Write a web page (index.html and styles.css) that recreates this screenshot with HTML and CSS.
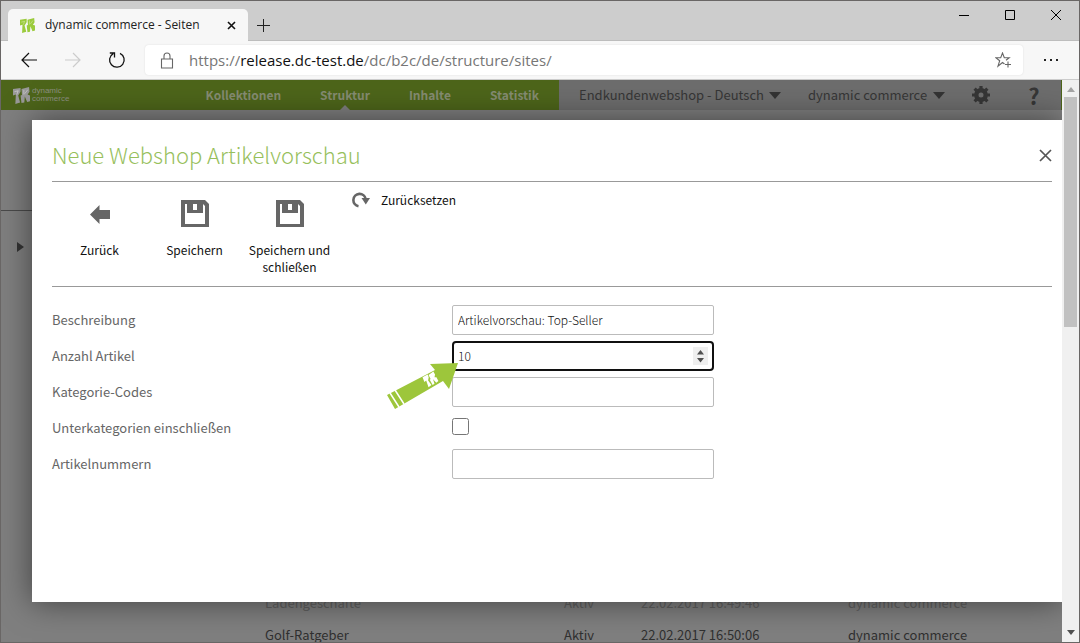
FILE: index.html
```
<!DOCTYPE html>
<html lang="de">
<head>
    <meta charset="UTF-8">
    <meta name="viewport" content="width=device-width, initial-scale=1.0">
    <title>dynamic commerce - Seiten</title>
    <link rel="stylesheet" href="styles.css">
</head>
<body>
    <svg class="sprite" width="0" height="0">
        <symbol id="logo" viewBox="0 0 18 18">
            <path d="M0 2l8-1v4L5.500 9l2 7.500-5 1.500L3 8 0 9z"/>
            <path d="M9 2l8-2 .5 5-2 3 2.500 1 .5 6-3.500 1-2.500-6-.5 6.500-3 .5-1-8 1.500-.5z"/>
            <path d="M1.500 5l4-1-1.500 4M11.500 3v5M15.500 3l-3 4" class="logo-gap"/>
        </symbol>
        <symbol id="disk" viewBox="0 0 28 28">
            <path fill-rule="evenodd" d="M0 0h24l4 4v23H0zM4 4v20h20V6l-2-2v9H6V4zM12 4v6h4V4z"/>
        </symbol>
    </svg>

    <div class="window">
        <!-- Tabs -->
        <div class="tabbar">
            <div class="tab">
                <svg class="tab-icon" width="15" height="15"><use href="#logo"/></svg>
                <span class="tab-title">dynamic commerce - Seiten</span>
                <button class="icon-button" aria-label="Tab schließen">
                    <svg width="9" height="9" viewBox="0 0 9 9"><path d="M1 1l7 7M8 1L1 8" stroke="#111" stroke-width="1.6"/></svg>
                </button>
            </div>
            <button class="icon-button new-tab" aria-label="Neuer Tab">
                <svg width="13" height="13" viewBox="0 0 13 13"><path d="M6.5 0v13M0 6.5h13" stroke="#222" stroke-width="1"/></svg>
            </button>
            <div class="window-controls">
                <button class="icon-button" aria-label="Minimieren">
                    <svg width="10" height="10" viewBox="0 0 10 10"><path d="M0 5.5h10" stroke="#000"/></svg>
                </button>
                <button class="icon-button" aria-label="Maximieren">
                    <svg width="10" height="10" viewBox="0 0 10 10"><path d="M.5.5h9v9h-9z" fill="none" stroke="#000"/></svg>
                </button>
                <button class="icon-button" aria-label="Schließen">
                    <svg width="10" height="10" viewBox="0 0 10 10"><path d="M0 0l10 10M10 0L0 10" stroke="#000"/></svg>
                </button>
            </div>
        </div>

        <!-- Address bar -->
        <div class="addressbar">
            <button class="icon-button" aria-label="Zurück">
                <svg width="16" height="16" viewBox="0 0 16 16" fill="none" stroke="#111" stroke-width="1.2"><path d="M16 8H1M8 1L1 8l7 7"/></svg>
            </button>
            <button class="icon-button" aria-label="Vorwärts">
                <svg width="16" height="16" viewBox="0 0 16 16" fill="none" stroke="#ccc" stroke-width="1.2"><path d="M0 8h15M8 1l7 7-7 7"/></svg>
            </button>
            <button class="icon-button" aria-label="Neu laden">
                <svg width="18" height="18" viewBox="0 0 18 18" fill="none" stroke="#111" stroke-width="1.3"><path d="M12 2.3A7.3 7.3 0 1 1 5.2 2.6M1.8 2H6.500v4.500"/></svg>
            </button>
            <div class="url">
                <svg width="14" height="17" viewBox="0 0 14 17" fill="none" stroke="#666" stroke-width="1.1"><path d="M1.500 7h11v9h-11zM4 7V4a3 3 0 0 1 6 0v3"/></svg>
                <span class="url-text">https://<b>release.dc-test.de</b>/dc/b2c/de/structure/sites/</span>
                <button class="icon-button" aria-label="Favorit">
                    <svg width="17" height="16" viewBox="0 0 17 16" fill="none" stroke="#666" stroke-width="1.1"><path d="M9.500 12L7.500 10.500 3 14.200l1.700-5.500L.8 5.700h4.900L7.500 1l1.800 4.700h4.900L11 8.200M10 12.500h6M13 9.500v6"/></svg>
                </button>
            </div>
            <button class="icon-button more" aria-label="Mehr">
                <svg width="14" height="2" viewBox="0 0 14 2"><path d="M0 0h2v2H0zM6 0h2v2H6zM12 0h2v2h-2z" fill="#222"/></svg>
            </button>
        </div>

        <div class="viewport">
            <div class="page">
                <header class="header">
                    <div class="header-main">
                        <a class="brand" href="#">
                            <svg width="17" height="17"><use href="#logo"/></svg>
                            <span>dynamic<br>commerce</span>
                        </a>
                        <nav class="nav">
                            <a href="#">Kollektionen</a>
                            <a href="#" class="active">Struktur</a>
                            <a href="#">Inhalte</a>
                            <a href="#">Statistik</a>
                        </nav>
                    </div>
                    <div class="header-tools">
                        <select aria-label="Shop"><option>Endkundenwebshop - Deutsch</option></select>
                        <select aria-label="Benutzer"><option>dynamic commerce</option></select>
                        <button class="icon-button" aria-label="Einstellungen">
                            <svg width="18" height="18" viewBox="0 0 18 18"><circle cx="9" cy="9" r="4.700" fill="none" stroke="#363636" stroke-width="4.400"/><path d="M9 0v4M9 14v4M0 9h4M14 9h4M2.600 2.600l3 3M12.400 12.400l3 3M2.600 15.400l3-3M12.400 5.600l3-3" stroke="#363636" stroke-width="3.200"/></svg>
                        </button>
                        <button class="icon-button help" aria-label="Hilfe">?</button>
                    </div>
                </header>
                <div class="content">
                    <aside class="sidebar">
                        <svg width="7" height="10" viewBox="0 0 7 10"><path d="M0 0l7 5-7 5z" fill="#333"/></svg>
                    </aside>
                    <table class="list">
                        <tr class="faded"><td>Ladengeschäfte</td><td>Aktiv</td><td>22.02.2017 16:49:46</td><td>dynamic commerce</td></tr>
                        <tr><td>Golf-Ratgeber</td><td>Aktiv</td><td>22.02.2017 16:50:06</td><td>dynamic commerce</td></tr>
                    </table>
                </div>

                <section class="modal" role="dialog" aria-labelledby="modalTitle">
                    <div class="modal-head">
                        <h1 id="modalTitle">Neue Webshop Artikelvorschau</h1>
                        <button class="icon-button" aria-label="Dialog schließen">
                            <svg width="13" height="13" viewBox="0 0 13 13"><path d="M1 1l11 11M12 1L1 12" stroke="#555" stroke-width="1.700"/></svg>
                        </button>
                    </div>
                    <div class="toolbar">
                        <button class="tool">
                            <span class="tool-icon"><svg width="20" height="19" viewBox="0 0 20 19"><path d="M0 9.500L9.500 0v5H20v9H9.500v5z"/></svg></span>
                            Zurück
                        </button>
                        <button class="tool">
                            <span class="tool-icon"><svg width="28" height="28"><use href="#disk"/></svg></span>
                            Speichern
                        </button>
                        <button class="tool">
                            <span class="tool-icon"><svg width="28" height="28"><use href="#disk"/></svg></span>
                            Speichern und schließen
                        </button>
                        <button class="reset">
                            <svg width="18" height="16" viewBox="0 0 18 16"><path d="M6.500 14.200A6.200 6.200 0 1 1 13.700 7" fill="none" stroke="#666" stroke-width="2.600"/><path d="M9.500 6H18l-4.200 6.500z"/></svg>
                            Zurücksetzen
                        </button>
                    </div>
                    <form class="form">
                        <label for="description">Beschreibung</label>
                        <div class="field"><input type="text" id="description" value="Artikelvorschau: Top-Seller"></div>

                        <label for="count">Anzahl Artikel</label>
                        <div class="field">
                            <input type="number" id="count" class="focused" value="10">
                            <svg class="spinner" width="15" height="18" viewBox="0 0 15 18"><path d="M0 0h15v18H0z" fill="#efefef"/><path d="M4 7.500L7.500 3 11 7.500zM4 11h7l-3.500 4.500z" fill="#505050"/></svg>
                            <svg class="pointer" width="72" height="47" viewBox="0 0 72 47">
                                <path d="M71 1L43 2l5 6L0 33l8 14 48-28 6 8z" fill="#9dc63b"/>
                                <path d="M3 31l9 14M8 28l9 14" stroke="#fff" stroke-width="1.500"/>
                                <g fill="#fff" transform="translate(35 14) rotate(-22) scale(.72)">
                                    <path d="M0 2l8-1v4L5.500 9l2 7.500-5 1.500L3 8 0 9z"/>
                                    <path d="M9 2l8-2 .5 5-2 3 2.500 1 .5 6-3.500 1-2.500-6-.5 6.500-3 .5-1-8 1.500-.5z"/>
                                </g>
                            </svg>
                        </div>

                        <label for="category">Kategorie-Codes</label>
                        <div class="field"><input type="text" id="category"></div>

                        <label for="subcategories">Unterkategorien einschließen</label>
                        <div class="field"><input type="checkbox" id="subcategories"></div>

                        <label for="articles">Artikelnummern</label>
                        <div class="field"><input type="text" id="articles"></div>
                    </form>
                </section>
            </div>
            <div class="scrollbar">
                <svg width="8" height="5" viewBox="0 0 8 5"><path d="M0 5l4-5 4 5z" fill="#a3a3a3"/></svg>
                <div class="thumb"></div>
                <svg width="8" height="5" viewBox="0 0 8 5"><path d="M0 0h8L4 5z" fill="#505050"/></svg>
            </div>
        </div>
    </div>
</body>
</html>
```

FILE: styles.css
```
* {
    box-sizing: border-box;
}

body {
    margin: 0;
    font-family: "Noto Sans CJK SC", "Noto Sans", sans-serif;
    font-size: 13px;
    line-height: 18px;
    color: #666;
}

button, input, select {
    font: inherit;
    color: inherit;
}

svg {
    display: block;
    flex: none;
}

.sprite {
    position: absolute;
}

.logo-gap {
    fill: none;
    stroke: #fff;
    stroke-opacity: 0.4;
}

.icon-button {
    display: flex;
    align-items: center;
    justify-content: center;
    flex: none;
    padding: 0;
    border: none;
    background: none;
    cursor: pointer;
}

.window {
    display: flex;
    flex-direction: column;
    height: 100vh;
    border: 1px solid #696665;
    overflow: hidden;
}

/* browser tabs */
.tabbar {
    display: flex;
    align-items: flex-end;
    flex: none;
    height: 40px;
    padding-left: 7px;
    background: #cdcdcd;
    font-family: "Open Sans", sans-serif;
    box-shadow: inset 0 -1px #bdbdbd;
}

.tab {
    display: flex;
    align-items: center;
    gap: 10px;
    width: 240px;
    height: 32px;
    padding: 0 12px;
    border-radius: 5px 5px 0 0;
    background: #f7f7f7;
}

.tab-icon {
    fill: #9bcb3c;
}

.tab-title {
    flex: 1;
    font-size: 12px;
    color: #222;
    white-space: nowrap;
}

.new-tab {
    width: 31px;
    height: 32px;
}

.window-controls {
    display: flex;
    align-self: flex-start;
    margin-left: auto;
}

.window-controls .icon-button {
    width: 46px;
    height: 28px;
}

/* address bar */
.addressbar {
    display: flex;
    align-items: center;
    flex: none;
    height: 39px;
    padding-left: 6px;
    background: #f7f7f7;
    border-bottom: 1px solid #ccc;
}

.addressbar > .icon-button {
    width: 44px;
    height: 30px;
}

.addressbar > .more {
    width: 56px;
}

.url {
    display: flex;
    align-items: center;
    flex: 1;
    gap: 15px;
    height: 30px;
    margin-left: 6px;
    padding: 0 11px 0 15px;
    border-radius: 4px;
    background: #fff;
    box-shadow: 0 0 2px #ddd;
}

.url-text {
    flex: 1;
    font-family: "Open Sans", sans-serif;
    font-size: 15px;
    color: #767676;
}

.url-text b {
    font-weight: normal;
    color: #111;
}

/* page */
.viewport {
    display: flex;
    flex: 1;
    min-height: 0;
}

.page {
    position: relative;
    display: flex;
    flex-direction: column;
    flex: 1;
    overflow: hidden;
    background: #7f7f7f;
}

.header {
    display: flex;
    flex: none;
    height: 30px;
    background: #6d6d6d;
    border-right: 1px solid #4d651a;
}

.header-main {
    display: flex;
    align-items: center;
    justify-content: space-between;
    flex: 1;
    padding: 0 20px 0 12px;
    background: #4d651a;
}

.brand {
    display: flex;
    align-items: center;
    gap: 2px;
    font-family: "Liberation Sans", sans-serif;
    font-size: 8px;
    line-height: 8px;
    color: #8c8f80;
    fill: #999;
    text-decoration: none;
}

.brand .logo-gap {
    stroke: #4d651a;
}

.nav {
    display: flex;
    align-self: stretch;
    gap: 39px;
}

.nav a {
    position: relative;
    line-height: 30px;
    font-size: 12px;
    font-weight: bold;
    color: #858c72;
    text-decoration: none;
}

.nav .active::after {
    content: "";
    position: absolute;
    bottom: 0;
    left: 50%;
    margin-left: -5px;
    border: 5px solid transparent;
    border-top: none;
    border-bottom-color: #7f7f7f;
}

.header-tools {
    display: flex;
    align-items: center;
    gap: 27px;
    padding: 0 18px 0 20px;
}

.header-tools select {
    appearance: none;
    padding: 0 17px 0 0;
    border: none;
    background: url("data:image/svg+xml,%3Csvg xmlns='http://www.w3.org/2000/svg' width='12' height='7'%3E%3Cpath d='M0 0h12L6 7z' fill='%23333'/%3E%3C/svg%3E") no-repeat right center;
    color: #363636;
}

.help {
    width: 18px;
    margin-left: 8px;
    font-size: 22px;
    font-weight: bold;
    color: #363636;
}

.content {
    display: flex;
    flex: 1;
    min-height: 0;
}

.sidebar {
    width: 244px;
    margin-top: 100px;
    padding: 31px 16px;
    border-top: 1px solid #4a4a4a;
}

.list {
    flex: 1;
    align-self: flex-end;
    margin-bottom: -7px;
    border-collapse: collapse;
    color: #303030;
}

.list td {
    height: 32px;
    padding: 9px 0 5px;
}

.list td:first-child {
    width: 319px;
    padding-left: 20px;
}

.list td:nth-child(2) {
    width: 77px;
}

.list td:nth-child(3) {
    width: 207px;
}

.list .faded {
    color: #606060;
}

/* dialog */
.modal {
    position: absolute;
    inset: 40px 0 40px 31px;
    padding: 20px 10px 20px 20px;
    background: #fff;
    box-shadow: 0 0 30px rgba(0, 0, 0, 0.5);
}

.modal-head {
    display: flex;
    align-items: center;
    justify-content: space-between;
    height: 42px;
    padding-bottom: 10px;
    border-bottom: 1px solid #999;
}

.modal-head h1 {
    margin: 0;
    padding-bottom: 4px;
    font-size: 22px;
    font-weight: 300;
    line-height: 28px;
    color: #97c05c;
}

.toolbar {
    display: flex;
    align-items: flex-start;
    height: 105px;
    border-bottom: 1px solid #999;
    fill: #666;
}

.tool, .reset {
    padding: 0;
    border: none;
    background: none;
    font-size: 12px;
    line-height: 17px;
    color: #111;
    cursor: pointer;
}

.tool {
    width: 95px;
    padding: 9px 5px 0;
}

.tool-icon {
    display: flex;
    align-items: center;
    justify-content: center;
    height: 46px;
    margin-bottom: 4px;
}

.reset {
    display: flex;
    align-items: center;
    gap: 11px;
    margin-left: 15px;
    padding-top: 9px;
}

.form {
    display: grid;
    grid-template-columns: 400px minmax(0, 262px);
    row-gap: 6px;
    align-items: center;
    padding-top: 18px;
}

.field {
    position: relative;
    display: flex;
    height: 30px;
}

.field input[type="text"], .field input[type="number"] {
    width: 100%;
    padding: 0 5px;
    border: 1px solid #bbb;
    border-radius: 2px;
    outline: none;
    background: #fff;
    font-size: 12px;
    font-weight: 300;
    color: #111;
    appearance: textfield;
}

.field input.focused {
    padding: 0 4px;
    border: 2px solid #101010;
    border-radius: 4px;
}

.field input[type="checkbox"] {
    width: 17px;
    height: 17px;
    margin: 5px 0 0;
}

.spinner {
    position: absolute;
    top: 6px;
    right: 6px;
}

.pointer {
    position: absolute;
    top: 21px;
    left: -65px;
    z-index: 1;
}

/* scrollbar */
.scrollbar {
    display: flex;
    flex-direction: column;
    align-items: center;
    justify-content: space-between;
    width: 17px;
    padding: 7px 1px;
    background: #f0f0f0;
}

.thumb {
    width: 13px;
    height: 230px;
    margin: 5px 0 auto;
    background: #c1c1c1;
}
```
